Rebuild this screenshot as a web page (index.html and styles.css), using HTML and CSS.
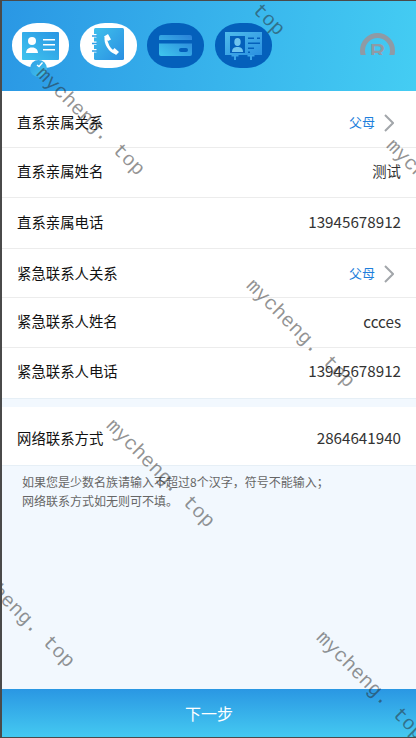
FILE: index.html
```html
<!DOCTYPE html>
<html lang="zh-CN">
<head>
  <meta charset="UTF-8" />
  <meta name="viewport" content="width=device-width, initial-scale=1.0" />
  <title>联系人信息</title>
  <link rel="stylesheet" href="styles.css">
</head>
<body>
  <div class="page">
    <header class="steps">
      <div class="step active">
        <svg class="step-icon" viewBox="0 0 57 45">
          <defs>
            <linearGradient id="g1" x1="0" y1="1" x2="1" y2="0">
              <stop offset="0" stop-color="#3fc4ee"/>
              <stop offset="1" stop-color="#2a96e4"/>
            </linearGradient>
          </defs>
          <rect x="10" y="9" width="37" height="28" rx="1" fill="url(#g1)"/>
          <circle cx="20" cy="18" r="4" fill="#fff"/>
          <path d="M14 30c0-3 2-5 4.500-5.500h3C24 25 26 27 26 30z" fill="#fff"/>
          <path d="M31 16h12v1.500H31zM31 21h12v1.500H31zM31 26h12v1.500H31z" fill="#fff"/>
        </svg>
        <span class="tick">
          <svg viewBox="0 0 17 17"><path d="M7 5l2 1.500 3.500-4" fill="none" stroke="#fff" stroke-width="1.300"/></svg>
        </span>
      </div>
      <div class="step active">
        <svg class="step-icon" viewBox="0 0 57 45">
          <defs>
            <linearGradient id="g2" x1="0" y1="0" x2="1" y2="1">
              <stop offset="0" stop-color="#3fc0ec"/>
              <stop offset="1" stop-color="#2a8fe2"/>
            </linearGradient>
          </defs>
          <rect x="14" y="5" width="30" height="32" rx="1.500" fill="url(#g2)"/>
          <path d="M12 11h4.500v3.500H12zM12 18.500h4.500V22H12zM12 26h4.500v3.500H12z" fill="#fff"/>
          <path d="M12 13h5M12 20.500h5M12 28h5" stroke="#2f9fe6" stroke-width="1.600" fill="none"/>
          <path d="M26 14c-1 6 3.500 14 10 16" stroke="#fff" stroke-width="2.800" fill="none"/>
          <path d="M24 13.500l4-2.500 3 5.500-3 1.500zM32 28l2.500-3 4.500 4-3 3z" fill="#fff"/>
        </svg>
      </div>
      <div class="step">
        <svg class="step-icon" viewBox="0 0 57 45">
          <defs>
            <linearGradient id="g3" x1="0" y1="1" x2="1" y2="0">
              <stop offset="0" stop-color="#3fc8ee"/>
              <stop offset="1" stop-color="#2a80d8"/>
            </linearGradient>
          </defs>
          <path d="M14 12h29a2 2 0 0 1 2 2v3H12v-3a2 2 0 0 1 2-2zM12 20.500h33V31a2 2 0 0 1-2 2H14a2 2 0 0 1-2-2z" fill="url(#g3)"/>
          <rect x="32" y="25" width="9" height="4" rx="2" fill="#0460bb"/>
        </svg>
      </div>
      <div class="step">
        <svg class="step-icon" viewBox="0 0 57 45">
          <defs>
            <linearGradient id="g4" x1="0" y1="0" x2="1" y2="1">
              <stop offset="0" stop-color="#4fbcec"/>
              <stop offset="1" stop-color="#2a90e0"/>
            </linearGradient>
          </defs>
          <rect x="10" y="9" width="37" height="23" fill="url(#g4)"/>
          <path d="M16.500 32h7v1.500h-2.500V37h-2v-3.500h-2.500zM32.500 32h7v1.500H37V37h-2v-3.500h-2.500z" fill="#3aa4e8"/>
          <rect x="15" y="13" width="15" height="17" fill="#0460bb"/>
          <ellipse cx="22.500" cy="19" rx="3.200" ry="4" fill="#6fc4ee"/>
          <path d="M17 29c0-4 2.500-5 5.500-5s5.500 1 5.500 5z" fill="#6fc4ee"/>
          <path d="M33 14.500h6v1.500h-6zM42 14.500h3v1.500h-3zM33 19.500h12V21H33zM33 24.500h6V26h-6zM33 28.500h2V30h-2z" fill="#0460bb"/>
        </svg>
      </div>
      <svg class="badge" viewBox="0 0 35 22">
        <circle cx="17.500" cy="17.500" r="15" fill="none" stroke="#8f9aa5" stroke-width="5"/>
        <text class="badge-letter" x="10" y="25">R</text>
      </svg>
    </header>

    <section class="group">
      <div class="row first">
        <span class="label">直系亲属关系</span>
        <span class="value link">父母</span>
        <svg class="arrow" viewBox="0 0 10 18"><path d="M1 1l8 8-8 8" fill="none" stroke="#a2a6aa" stroke-width="2"/></svg>
      </div>
      <div class="row h50">
        <span class="label">直系亲属姓名</span>
        <span class="value small">测试</span>
      </div>
      <div class="row h51">
        <span class="label">直系亲属电话</span>
        <span class="value">13945678912</span>
      </div>
      <div class="row h49">
        <span class="label">紧急联系人关系</span>
        <span class="value link">父母</span>
        <svg class="arrow" viewBox="0 0 10 18"><path d="M1 1l8 8-8 8" fill="none" stroke="#a2a6aa" stroke-width="2"/></svg>
      </div>
      <div class="row h50">
        <span class="label">紧急联系人姓名</span>
        <span class="value">ccces</span>
      </div>
      <div class="row h51 last">
        <span class="label">紧急联系人电话</span>
        <span class="value">13945678912</span>
      </div>
    </section>

    <section class="group second">
      <div class="row tall">
        <span class="label">网络联系方式</span>
        <span class="value">2864641940</span>
      </div>
    </section>

    <p class="note">如果您是少数名族请输入不超过8个汉字，符号不能输入；<br>网络联系方式如无则可不填。</p>

    <button class="next-btn">下一步</button>

    <span class="mark m1">mycheng. top</span>
    <span class="mark m2">mycheng. top</span>
    <span class="mark m3">mycheng. top</span>
    <span class="mark m4">mycheng. top</span>
    <span class="mark m5">mycheng. top</span>
    <span class="mark m6">mycheng. top</span>
    <span class="mark m7">mycheng. top</span>
  </div>
</body>
</html>
```

FILE: styles.css
```css
* {
  box-sizing: border-box;
  margin: 0;
  padding: 0;
}
html, body {
  height: 100%;
}
body {
  background: #4a4a4a;
  font-family: "Noto Sans CJK SC", "Noto Sans", sans-serif;
  overflow: hidden;
}
.page {
  position: relative;
  display: flex;
  flex-direction: column;
  height: 736px;
  margin: 1px 0 0 2px;
  background: #f2f8fe;
  overflow: hidden;
}
.steps {
  display: flex;
  align-items: flex-start;
  gap: 10.6px;
  height: 90px;
  padding: 22px 0 0 10px;
  background: linear-gradient(100deg, #2a97e4, #44cdf3);
}
.step {
  position: relative;
  width: 57px;
  height: 45px;
  background: #0460bb;
  border-radius: 25px / 22px;
}
.step.active {
  background: #fff;
}
.step-icon {
  display: block;
  width: 57px;
  height: 45px;
}
.tick {
  position: absolute;
  left: 18px;
  top: 37px;
  width: 17px;
  height: 17px;
  border-radius: 50%;
  background: linear-gradient(135deg, #2f9fe6, #42c4ec);
}
.tick svg {
  display: block;
}
.badge {
  width: 35px;
  height: 22px;
  margin: 10px 21px 0 auto;
}
.badge-letter {
  font-family: "Liberation Sans", sans-serif;
  font-size: 21px;
  font-weight: bold;
  fill: #8f9aa5;
}
.group {
  background: #fff;
}
.second {
  margin-top: 8px;
}
.row {
  display: flex;
  align-items: center;
  height: 57px;
  padding: 0 15px 4px;
  border-bottom: 1px solid #ececec;
}
.row.first {
  padding: 4px 15px 0;
}
.h49 {
  height: 49px;
  padding-bottom: 2px;
}
.h50 { height: 50px; }
.h51 { height: 51px; }
.row.last {
  padding-bottom: 6px;
  border-bottom-color: #e6eff6;
}
.row.tall {
  height: 59px;
  padding: 2px 15px 0;
  border-bottom-color: #e6eff6;
}
.label {
  flex: 1;
  font-size: 14.4px;
  color: #111;
}
.value {
  font-size: 15.2px;
  color: #333;
}
.value.small {
  font-size: 14.4px;
}
.link {
  font-size: 13px;
  color: #1e7fdc;
}
.arrow {
  width: 10px;
  height: 18px;
  margin: 3px 7px 0 9px;
}
.note {
  flex: 1;
  padding: 6px 20px;
  font-size: 12px;
  line-height: 19px;
  color: #666;
}
.next-btn {
  height: 48px;
  border: none;
  background: linear-gradient(180deg, #2a97e3, #44c9f1);
  color: #fff;
  font-family: inherit;
  font-size: 16px;
}
.mark {
  position: absolute;
  font-family: "Liberation Mono", monospace;
  font-size: 20px;
  line-height: 20px;
  white-space: nowrap;
  color: rgba(40, 40, 40, 0.5);
  transform: translate(-50%, -50%) rotate(45deg);
}
.m1 { left: 88px; top: 121px; }
.m2 { left: 228px; top: -19px; }
.m3 { left: 438px; top: 193px; }
.m4 { left: 298px; top: 333px; }
.m5 { left: 158px; top: 473px; }
.m6 { left: 18px; top: 613px; }
.m7 { left: 368px; top: 685px; }
```
